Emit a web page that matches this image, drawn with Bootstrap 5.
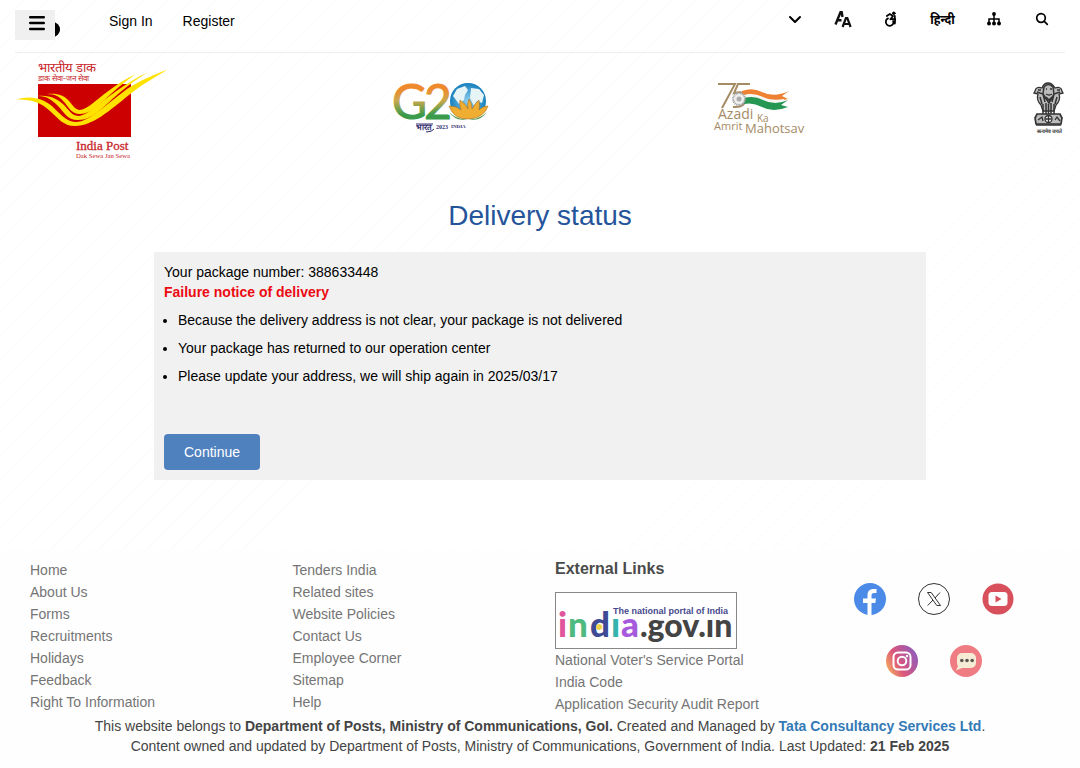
<!DOCTYPE html>
<html lang="en">
<head>
<meta charset="utf-8">
<meta name="viewport" content="width=device-width, initial-scale=1">
<title>India Post - Delivery status</title>
<link href="https://cdn.jsdelivr.net/npm/bootstrap@5.3.0/dist/css/bootstrap.min.css" rel="stylesheet">
<style>
  body {
    font-family: "Liberation Sans", Arial, sans-serif;
    font-size: 14px; line-height: 20px; color: #000;
    background: repeating-linear-gradient(135deg, #fff 0 16px, #fcfcfc 16px 17px);
  }
  svg { display: block; flex: none; overflow: visible; }
  .page-pad { padding-left: 15px; padding-right: 15px; }
  .topbar { height: 53px; border-bottom: 1px solid #eee; }
  .menu-wrap { width: 94px; height: 53px; }
  .menu-btn { top: 10px; left: 0; width: 40px; height: 30px; background: #f0f0f0; border: 0; padding: 0 0 4px 4px; }
  .contrast-btn { margin: 22px 0 0 30px; }
  .plain-btn { background: none; border: 0; padding: 0; color: #000; }
  .auth { gap: 30px; padding-top: 11px; }
  .tools { gap: 32px; height: 38px; padding-right: 15px; }
  .tools svg { width: 16px; height: 16px; }
  .hindi { font: bold 12px/16px "Noto Sans Devanagari", "Liberation Sans", sans-serif; width: 23px; padding-top: 3px; display: flex; justify-content: center; white-space: nowrap; }
  .logos { height: 110px; }
  h1 { font-size: 28px; line-height: 32px; color: #25549b; font-weight: 400; margin: 37px 0 20px; }
  .notice { max-width: 772px; background: #f1f1f1; padding: 10px; }
  .notice .alert-line { color: #ec0b12; font-weight: 700; }
  .notice ul { padding-left: 14px; margin: 8px 0 48px; }
  .notice li + li { margin-top: 8px; }
  .btn-continue { font-size: 14px; line-height: 20px; padding: 8px 20px; border: 0; border-radius: 4px; color: #fff; background: #5081bf; }
  .btn-continue:hover { color: #fff; background: #416fa8; }
  footer { margin-top: 70px; padding-top: 9px; padding-bottom: 12px; background: #fefefe; color: #444; }
  footer .row { --bs-gutter-x: 30px; margin: 0; }
  .foot-links { line-height: 22px; }
  .foot-links a { color: #757575; text-decoration: none; }
  .foot-links h2 { font-size: 16px; line-height: 20px; font-weight: 700; color: #4a4a4a; margin: 0 0 13px; }
  .portal { width: 182px; height: 57px; border: 1px solid #888; background: #fff; display: block; }
  .social { gap: 30px; padding-top: 24px; }
  .social > div { gap: 32px; }
  .credits { line-height: 20px; margin-top: 1px; }
  .credits a { color: #337ab7; font-weight: 700; text-decoration: none; }
</style>
</head>
<body>
<header class="page-pad">
  <div class="topbar d-flex align-items-start">
    <div class="menu-wrap position-relative">
      <button class="plain-btn contrast-btn" aria-label="Contrast">
        <svg width="15" height="15" viewBox="0 0 16 16"><circle cx="8" cy="8" r="7" fill="#fff" stroke="#000" stroke-width="1"/><path d="M8 0a8 8 0 0 1 0 16z"/></svg>
      </button>
      <button class="menu-btn position-absolute d-flex align-items-center justify-content-center" aria-label="Menu">
        <svg width="16" height="16" viewBox="0 0 16 16" stroke="#000" stroke-width="2.4" stroke-linecap="round"><path d="M1.2 2.3h13.6M1.2 8h13.6M1.2 14h13.6"/></svg>
      </button>
    </div>
    <nav class="auth d-flex">
      <a href="#" class="text-black text-decoration-none">Sign In</a>
      <a href="#" class="text-black text-decoration-none">Register</a>
    </nav>
    <div class="tools d-flex align-items-center ms-auto">
      <button class="plain-btn" aria-label="More"><svg viewBox="0 0 16 16" fill="none" stroke="#000" stroke-width="2" stroke-linecap="round" stroke-linejoin="round"><path d="M3 6l5 5 5-5"/></svg></button>
      <button class="plain-btn" aria-label="Text size"><svg viewBox="0 0 16 16" fill="none" stroke="#111"><path stroke-width="2.4" d="M.5 13.500L5.500 1.200h1.200L7.500 6M3 9.200h3.500"/><path stroke-width="2.200" d="M7.600 16l3.300-9h1.400l3.300 9M9 13h5"/></svg></button>
      <button class="plain-btn" aria-label="Accessibility"><svg viewBox="0 0 16 16" fill="none" stroke="#000" stroke-width="1.800" stroke-linecap="round" stroke-linejoin="round"><circle cx="10.800" cy="2.300" r="1.300" fill="#000" stroke-width="1"/><path d="M3.800 5l3-2 3.200 2-2.600 3.200M7.400 8.200l4.800-.4-.4 4.800M5 7.400a3.900 3.900 0 1 0 5 5.600c.5-1 .5-2 .1-3M11.800 5v2.500"/></svg></button>
      <button class="plain-btn hindi" lang="hi">हिन्दी</button>
      <button class="plain-btn" aria-label="Sitemap"><svg viewBox="0 0 16 16"><path d="M8 3v9M3 12V8h10v4" fill="none" stroke="#000" stroke-width="1.500"/><circle cx="8" cy="3" r="1.900"/><circle cx="3" cy="12.500" r="2"/><circle cx="8" cy="12.500" r="2"/><circle cx="13" cy="12.500" r="2"/></svg></button>
      <button class="plain-btn" aria-label="Search"><svg viewBox="0 0 16 16" fill="none" stroke="#000" stroke-width="1.700" stroke-linecap="round"><circle cx="7" cy="7" r="4.300"/><path d="M10.300 10.300l3 3"/></svg></button>
    </div>
  </div>
  <div class="logos d-flex align-items-center justify-content-between">
    <a href="#" aria-label="India Post">
      <svg width="152" height="106" viewBox="15 55 152 106">
        <path fill="#c00" d="M38 84h93v53H38z"/>
        <g fill="#ffe200">
          <path d="M16 99.500C31 95 44 98 54 108c8 8 14 14 22 14 13 0 32-19 51-33 14-9 28-15 40-19-15 9-26 15-38 25-19 15-36 31-54 31-12 0-17-8-25-15-9-9-20-12-34-11.500z"/>
          <path d="M38 96c12-1 20 3 27 10 5 6 8 10 14 10 9-1 22-14 36-24 11-8 22-15 34-20-13 7-20 13-31 22-15 13-25 26-40 26-11 0-14-8-20-14-6-6-11-10-20-10z"/>
          <path d="M47 94c10-1 17 1 22 7 4 5 7 9 11 9 8-1 17-11 27-18 9-7 18-13 29-18-10 7-16 12-24 19-12 11-21 21-32 21-8 0-11-6-15-11-5-6-9-9-18-9z"/>
        </g>
        <g fill="#c8262b" font-family="'Liberation Serif', serif">
          <text x="38" y="72" font-size="13" lang="hi">भारतीय डाक</text>
          <text x="38" y="81" font-size="8" lang="hi">डाक सेवा-जन सेवा</text>
          <text x="76" y="150" font-size="13" font-family="'Liberation Serif', serif" stroke="#c8262b" stroke-width=".3">India Post</text>
          <text x="76" y="158" font-size="6.700">Dak Sewa Jan Sewa</text>
        </g>
      </svg>
    </a>
    <svg width="95" height="52" viewBox="395 82 95 52" role="img" aria-label="G20 India 2023">
      <defs>
        <linearGradient id="tri" x1="0" y1="0" x2="0" y2="1"><stop offset=".3" stop-color="#ef8a2c"/><stop offset=".5" stop-color="#c9a94c"/><stop offset=".75" stop-color="#3c9a4b"/></linearGradient>
        <radialGradient id="globe"><stop offset="0" stop-color="#8fd0ef"/><stop offset="1" stop-color="#1780bd"/></radialGradient>
      </defs>
      <text y="119" font-family="Lato, sans-serif" font-weight="400" font-size="48" fill="url(#tri)" stroke="url(#tri)" stroke-width="1"><tspan x="394">G</tspan><tspan x="426">2</tspan></text>
      <circle cx="470" cy="101" r="18" fill="url(#globe)"/>
      <path fill="#e7f4f6" d="M455 96l4-7 8-3 3 4-3 5-1 5-5 4zM473 88l8 1 5 6-2 8-5-2-3 5-4-8z"/>
      <path fill="#efad32" stroke="#ad7020" stroke-width=".6" d="M471 119q-15 1-20-13 8 0 12 4-2-6-1-10 6 4 8 9-1-6 1-10 3 4 3 10 3-6 7-9 1 6 0 10 4-4 9-4-4 12-19 13z"/>
      <path fill="#4e954b" d="M451 112q8 8 18 7-11 3-18-7zM489 112q-8 8-18 7 11 3 18-7z"/>
      <g fill="#343071" font-family="'Liberation Serif', serif" font-weight="700"><text x="418" y="130" font-size="8" lang="hi">भारत</text><text x="438" y="129" font-size="6">2023</text><text x="453" y="128" font-size="5">INDIA</text></g>
      <path d="M418 124h17M428 132q6 0 8-3" stroke="#343071" fill="none"/>
    </svg>
    <svg width="94" height="52" viewBox="714 82 94 52" role="img" aria-label="Azadi Ka Amrit Mahotsav">
      <path d="M719 84h17L723 108M751 84h-12l-4 9q13-3 12 6-1 9-13 8" fill="none" stroke="#a58b65" stroke-width="2"/>
      <path fill="#ee8132" d="M743 91q10-4 20 1 12 6 27-1l-7 5 6 3q-14 4-25-2-10-5-21-2z"/>
      <path fill="#f5f5f3" d="M743 95q12-2 22 3 10 3 20 1v3q-12 3-22-2-9-4-20-1z"/>
      <path fill="#269653" d="M745 98q10-3 19 2 12 6 25 0l-7 5 7 2q-15 6-26 0-9-5-18-3z"/>
      <circle cx="740" cy="99" r="6" fill="#eee" stroke="#a0a0a0" stroke-width="2" stroke-dasharray="1 .6"/>
      <circle cx="740" cy="99" r="2.500" fill="#aaa"/>
      <g fill="#a58b65" font-family="'Open Sans', sans-serif" font-weight="500"><text x="719" y="119" font-size="14">Azadi</text><text x="758" y="122" font-size="10">Ka</text><text x="715" y="130" font-size="11">Amrit</text><text x="746" y="133" font-size="13">Mahotsav</text></g>
    </svg>
    <svg width="32" height="52" viewBox="1033 82 32 52" role="img" aria-label="State Emblem of India">
      <g fill="#bbb" stroke="#333" stroke-width="1.300">
        <path d="M1042 88q-6-2-7 3l-1 2 4 1q-2 6 3 11l2 6h11l2-6q5-5 3-11l4-1-1-2q-1-5-7-3-3-5-7-5t-6 5z"/>
        <path d="M1044 87q4-5 9 0l1 7-5 9-6-9zM1037 92l6 2 2 8M1060 92l-6 2-2 8M1046 89h1M1050 89h2M1046 94q3 2 6 0M1038 90h3M1057 90h3M1040 97l2 7M1057 97l-2 7M1046 97l3 3 3-3" stroke-width="1.500"/>
        <path d="M1043 104v10M1046 103v11M1051 103v11M1054 104v10M1048.500 104v10" fill="none" stroke-width="1.500"/>
        <path d="M1037 114h23l2 4-1 6h-25l-1-6z" stroke-width="1.700"/>
        <circle cx="1048.500" cy="119" r="3.500" fill="#eee"/><path d="M1045.500 119h6M1048.500 116v6M1038 120l4-3 1 4M1055 120l2-3 3 4M1036 125h25" fill="none"/>
      </g>
      <text x="1037" y="132.500" font-size="5" font-weight="700" fill="#333" font-family="sans-serif" lang="hi">सत्यमेव जयते</text>
    </svg>
  </div>
</header>

<main class="page-pad">
  <h1 class="text-center">Delivery status</h1>
  <section class="notice mx-auto">
    <div>Your package number: 388633448</div>
    <div class="alert-line">Failure notice of delivery</div>
    <ul>
      <li>Because the delivery address is not clear, your package is not delivered</li>
      <li>Your package has returned to our operation center</li>
      <li>Please update your address, we will ship again in 2025/03/17</li>
    </ul>
    <button type="button" class="btn btn-continue d-block">Continue</button>
  </section>
</main>

<footer class="page-pad">
  <div class="row foot-links">
    <div class="col-3 d-flex flex-column align-items-start">
      <a href="#">Home</a><a href="#">About Us</a><a href="#">Forms</a><a href="#">Recruitments</a><a href="#">Holidays</a><a href="#">Feedback</a><a href="#">Right To Information</a>
    </div>
    <div class="col-3 d-flex flex-column align-items-start">
      <a href="#">Tenders India</a><a href="#">Related sites</a><a href="#">Website Policies</a><a href="#">Contact Us</a><a href="#">Employee Corner</a><a href="#">Sitemap</a><a href="#">Help</a>
    </div>
    <div class="col-3 d-flex flex-column align-items-start">
      <h2>External Links</h2>
      <a href="#" class="portal" aria-label="The national portal of India">
        <svg width="180" height="55" viewBox="556 593 180 55">
          <g font-family="Lato, sans-serif" font-weight="900">
            <text y="637" font-size="35"><tspan x="558" fill="#e0559c">i</tspan><tspan x="568" fill="#4fba80">n</tspan><tspan x="590" fill="#3e4a94">d</tspan><tspan x="611" fill="#35b4ae">ı</tspan><tspan x="621" fill="#a65bdc">a</tspan></text>
            <text x="640" y="637" font-size="32" fill="#444">.gov.ın</text>
          </g>
          <circle cx="599" cy="627" r="3" fill="#f0d34b"/>
          <text x="613" y="614" font-family="'Liberation Sans', sans-serif" font-weight="700" font-size="9" fill="#46498c">The national portal of India</text>
        </svg>
      </a>
      <a href="#">National Voter's Service Portal</a><a href="#">India Code</a><a href="#">Application Security Audit Report</a>
    </div>
    <div class="col-3 social d-flex flex-column align-items-center">
      <div class="d-flex">
        <a href="#" aria-label="Facebook"><svg width="32" height="32" viewBox="0 0 32 32"><circle cx="16" cy="16" r="16" fill="#4c8ae8"/><path fill="#fff" d="M13.500 32V20H9v-4.500h4.500V12c0-4 2.500-6 6-6h3v4h-2.300c-2 0-2.700 1-2.700 2.500v3H22l-.7 4.500h-3.800v12z"/></svg></a>
        <a href="#" aria-label="X"><svg width="32" height="32" viewBox="0 0 32 32" fill="none" stroke="#333"><circle cx="16" cy="16" r="15.500"/><path d="M9.500 9.500h3.700l9.300 13h-3.700zM22 9.500l-5 5.500M15 17l-5.300 5.500"/></svg></a>
        <a href="#" aria-label="YouTube"><svg width="32" height="32" viewBox="0 0 32 32"><circle cx="16" cy="16" r="15.500" fill="#d7505b"/><rect x="6.500" y="9" width="19" height="14" rx="3.500" fill="#fff"/><path d="M13.500 12.500v7l6-3.500z" fill="#d7505b"/></svg></a>
      </div>
      <div class="d-flex">
        <a href="#" aria-label="Instagram"><svg width="32" height="32" viewBox="0 0 32 32"><defs><linearGradient id="insta" x1="0" y1=".8" x2="1" y2=".3"><stop offset="0" stop-color="#f6b25d"/><stop offset=".4" stop-color="#dc557a"/><stop offset="1" stop-color="#8f5cbd"/></linearGradient></defs><circle cx="16" cy="16" r="16" fill="url(#insta)"/><g fill="none" stroke="#fff" stroke-width="2"><rect x="7.500" y="7.500" width="17" height="17" rx="4.500"/><circle cx="16" cy="16" r="4.300"/></g><circle cx="21" cy="11" r="1.200" fill="#fff"/></svg></a>
        <a href="#" aria-label="Chat"><svg width="32" height="32" viewBox="0 0 32 32"><circle cx="16" cy="16" r="16" fill="#ef7c82"/><path fill="#f5ecd5" d="M12 8h9a5 5 0 0 1 5 5v5a5 5 0 0 1-5 5h-9l-6 2.500 2-4.500q-1-1-1-3v-5a5 5 0 0 1 5-5z"/><g fill="#5c5650"><circle cx="11.800" cy="15.500" r="1.800"/><circle cx="17" cy="15.500" r="1.800"/><circle cx="22.200" cy="15.500" r="1.800"/></g></svg></a>
      </div>
    </div>
  </div>
  <div class="credits text-center">
    <div>This website belongs to <b>Department of Posts, Ministry of Communications, GoI.</b> Created and Managed by <a href="#">Tata Consultancy Services Ltd</a>.</div>
    <div>Content owned and updated by Department of Posts, Ministry of Communications, Government of India. Last Updated: <b>21 Feb 2025</b></div>
  </div>
</footer>
<script src="https://cdn.jsdelivr.net/npm/bootstrap@5.3.0/dist/js/bootstrap.bundle.min.js"></script>
</body>
</html>
